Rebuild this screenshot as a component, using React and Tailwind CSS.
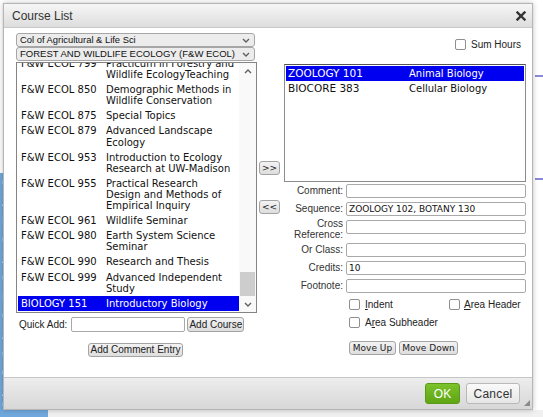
import React from "react";

const leftCourses = [
  { code: "F&W ECOL 799", title: ["Practicum in Forestry and", "Wildlife EcologyTeaching"] },
  { code: "F&W ECOL 850", title: ["Demographic Methods in", "Wildlife Conservation"] },
  { code: "F&W ECOL 875", title: ["Special Topics"] },
  { code: "F&W ECOL 879", title: ["Advanced Landscape", "Ecology"] },
  { code: "F&W ECOL 953", title: ["Introduction to Ecology", "Research at UW-Madison"] },
  { code: "F&W ECOL 955", title: ["Practical Research", "Design and Methods of", "Empirical Inquiry"] },
  { code: "F&W ECOL 961", title: ["Wildlife Seminar"] },
  { code: "F&W ECOL 980", title: ["Earth System Science", "Seminar"] },
  { code: "F&W ECOL 990", title: ["Research and Thesis"] },
  { code: "F&W ECOL 999", title: ["Advanced Independent", "Study"] },
  { code: "BIOLOGY 151", title: ["Introductory Biology"], selected: true },
];

const pickedCourses = [
  { code: "ZOOLOGY 101", title: "Animal Biology", selected: true },
  { code: "BIOCORE 383", title: "Cellular Biology" },
];

const Chevron = ({ up }) => (
  <svg width="8" height="5" viewBox="0 0 8 5">
    <polyline
      points={up ? "1,4 4,1 7,4" : "1,1 4,4 7,1"}
      fill="none"
      stroke="#606060"
      strokeWidth="1.4"
    />
  </svg>
);

const Checkbox = () => (
  <span className="inline-block w-[11px] h-[11px] shrink-0 rounded-[2px] border border-[#8f8f8f] bg-white" />
);

const SmallButton = ({ children, className = "" }) => (
  <button
    className={`h-[14px] flex items-center justify-center rounded-[3px] border border-[#a3a3a3] bg-gradient-to-b from-[#f3f3f3] to-[#dedede] text-[#222] leading-none ${className}`}
  >
    {children}
  </button>
);

const Select = ({ children, className = "" }) => (
  <div className="h-[14px] w-[239px] flex items-center justify-between rounded-[3px] border border-[#a6a6a6] bg-[#ececec] pl-[3px] pr-[4px] leading-none text-[#111]">
    <span className={`whitespace-nowrap ${className}`}>{children}</span>
    <Chevron />
  </div>
);

const Field = ({ label, value = "", tall }) => (
  <>
    <div
      className={`text-right text-[10px] text-[#333] ${
        tall ? "leading-[11px] -mt-[2px] h-[21px]" : "leading-[14px]"
      }`}
    >
      {label}
    </div>
    <div className="h-[14px] rounded-[2px] border border-[#a9a9a9] bg-white pl-[2px] font-['DejaVu_Sans',sans-serif] text-[9px] leading-[12px] text-[#111]">
      {value}
    </div>
  </>
);

export default function App() {
  return (
    <div className="relative w-[543px] h-[417px] overflow-hidden bg-white font-['Liberation_Sans',Arial,sans-serif]">
      {/* page behind the dialog */}
      <div className="flex h-full">
        <div className="w-[48px] flex flex-col">
          <div className="h-[173px] bg-white" />
          <div className="flex-1 bg-[#6fa8dc] text-white text-[13px] leading-[19px] pl-[2px] overflow-hidden">
            <div>CT 101</div>
            <div>ZOO</div>
            <div>BIO 1</div>
            <div>CX 2</div>
            <div>ZOO</div>
            <div>CHE</div>
            <div>BOT</div>
            <div>CX 3</div>
            <div>ZOO</div>
            <div>CHE</div>
            <div>OX 1</div>
            <div>ZOO</div>
            <div className="-mt-[6px]">CT 102</div>
          </div>
        </div>
        <div className="flex-1 flex flex-col">
          <div className="flex-1 flex flex-col items-end bg-white">
            <div className="mt-[75px] h-[2px] w-[8px] bg-[#8a8ad6]" />
            <div className="mt-[101px] h-[2px] w-[8px] bg-[#8a8ad6]" />
          </div>
          <div className="h-[7px] bg-[#f0f0f0]" />
        </div>
      </div>

      {/* dialog */}
      <div className="absolute left-[3px] top-[3px] w-[530px] h-[407px] flex flex-col border border-[#b5b5b5] bg-white shadow-[0_0_5px_rgba(0,0,0,0.25)]">
        <div className="h-[24px] flex items-center justify-between border-b border-[#c9c9c9] bg-gradient-to-b from-[#f6f6f6] to-[#dddddd] pl-[8px] pr-[6px]">
          <span className="text-[12px] text-[#333]">Course List</span>
          <svg width="10" height="10" viewBox="0 0 10 10">
            <path d="M1.5 1.5 L8.5 8.5 M8.5 1.5 L1.5 8.5" stroke="#333" strokeWidth="2.4" strokeLinecap="square" />
          </svg>
        </div>

        <div className="h-[349px] flex pl-[12px] pt-[5px]">
          {/* left column */}
          <div className="w-[241px] flex flex-col">
            <Select className="text-[9.4px]">Col of Agricultural &amp; Life Sci</Select>
            <Select className="text-[9.5px]">FOREST AND WILDLIFE ECOLOGY (F&amp;W ECOL)</Select>
            <div className="mt-[1px] h-[251px] flex border border-[#848484] bg-white">
              <div className="flex-1 overflow-hidden pl-[1px] font-['DejaVu_Sans',Verdana,sans-serif] text-[10px] leading-[11.1px] text-[#111]">
                <div className="-mt-[7px]">
                  {leftCourses.map((c) => (
                    <div
                      key={c.code}
                      className={`flex py-[2px] pl-[3px] ${c.selected ? "bg-[#0000f0] text-white" : ""}`}
                    >
                      <div className="w-[85px] shrink-0 whitespace-nowrap">{c.code}</div>
                      <div className="whitespace-nowrap">
                        {c.title.map((t) => (
                          <div key={t}>{t}</div>
                        ))}
                      </div>
                    </div>
                  ))}
                </div>
              </div>
              <div className="w-[17px] flex flex-col bg-[#f9f9f9]">
                <div className="h-[17px] flex items-center justify-center">
                  <Chevron up />
                </div>
                <div className="flex-1 flex flex-col justify-end">
                  <div className="h-[24px] mx-[1px] bg-[#cdcdcd]" />
                </div>
                <div className="h-[16px] flex items-center justify-center">
                  <Chevron />
                </div>
              </div>
            </div>
            <div className="mt-[4px] h-[15px] flex items-center text-[10px] text-[#222]">
              <span className="pl-[3px]">Quick Add:</span>
              <div className="ml-[4px] h-[15px] w-[114px] rounded-[2px] border border-[#a9a9a9] bg-white" />
              <SmallButton className="ml-[2px] w-[57px] h-[15px] text-[10px]">Add Course</SmallButton>
            </div>
            <SmallButton className="mt-[11px] ml-[72px] w-[95px] text-[10px]">Add Comment Entry</SmallButton>
          </div>

          {/* move buttons */}
          <div className="ml-[2px] w-[21px] flex flex-col font-['DejaVu_Sans',sans-serif] text-[9px]">
            <SmallButton className="mt-[128px] w-[21px] h-[13px]">&gt;&gt;</SmallButton>
            <SmallButton className="mt-[25px] w-[21px] h-[13px]">&lt;&lt;</SmallButton>
          </div>

          {/* right column */}
          <div className="ml-[4px] w-[242px] flex flex-col">
            <div className="h-[22px] flex items-center justify-end gap-[5px] pr-[5px] text-[10px] text-[#222]">
              <Checkbox />
              <span>Sum Hours</span>
            </div>
            <div className="mt-[9px] h-[118px] border border-[#8c8c8c] border-t-[#555] bg-white p-[1px] font-['DejaVu_Sans',Verdana,sans-serif] text-[10px] text-[#111]">
              {pickedCourses.map((c) => (
                <div
                  key={c.code}
                  className={`h-[15px] flex items-center pl-[2px] ${c.selected ? "bg-[#0000f0] text-white" : ""}`}
                >
                  <span className="w-[121px] shrink-0 text-[10.5px]">{c.code}</span>
                  <span>{c.title}</span>
                </div>
              ))}
            </div>
            <div className="mt-[2px] grid grid-cols-[59px_180px] gap-x-[3px] gap-y-[4px]">
              <Field label="Comment:" />
              <Field label="Sequence:" value="ZOOLOGY 102, BOTANY 130" />
              <Field label={<>Cross<br />Reference:</>} tall />
              <Field label="Or Class:" />
              <Field label="Credits:" value="10" />
              <Field label="Footnote:" />
            </div>
            <div className="mt-[5px] ml-[65px] grid grid-cols-[100px_1fr] gap-y-[6px] text-[10px] text-[#222]">
              <div className="h-[12px] flex items-center gap-[5px]">
                <Checkbox />
                <span>
                  <span className="underline">I</span>ndent
                </span>
              </div>
              <div className="h-[12px] flex items-center gap-[4px]">
                <Checkbox />
                <span>
                  <span className="underline">A</span>rea Header
                </span>
              </div>
              <div className="col-span-2 h-[12px] flex items-center gap-[5px]">
                <Checkbox />
                <span>
                  A<span className="underline">r</span>ea Subheader
                </span>
              </div>
            </div>
            <div className="mt-[13px] ml-[65px] flex gap-[3px] font-['DejaVu_Sans',sans-serif] text-[9px]">
              <SmallButton className="w-[47px] h-[13px]">Move Up</SmallButton>
              <SmallButton className="w-[59px] h-[13px]">Move Down</SmallButton>
            </div>
          </div>
        </div>

        <div className="relative flex-1 flex items-center justify-end gap-[6px] border-t border-[#c6c6c6] bg-gradient-to-b from-[#ededed] to-[#d7d7d7] pr-[12px]">
          <button className="h-[21px] w-[35px] rounded-[3px] border border-[#5a9a17] bg-gradient-to-b from-[#7cc22b] to-[#5fa514] text-[12px] text-white">
            OK
          </button>
          <button className="h-[21px] w-[54px] rounded-[3px] border border-[#b9b9b9] bg-gradient-to-b from-[#fafafa] to-[#e6e6e6] text-[12px] text-[#333] tracking-[0.3px]">
            Cancel
          </button>
          <svg className="absolute right-[2px] bottom-[3px]" width="6" height="6" viewBox="0 0 6 6">
            <polygon points="6,0 6,6 0,6" fill="#8a8a8a" />
          </svg>
        </div>
      </div>
    </div>
  );
}
